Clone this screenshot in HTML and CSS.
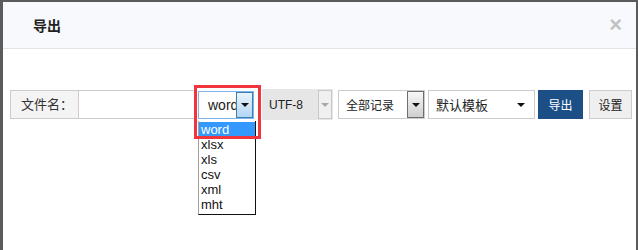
FILE: index.html
```html
<!DOCTYPE html>
<html lang="zh-CN">
<head>
    <meta charset="UTF-8">
    <meta name="viewport" content="width=device-width, initial-scale=1.0">
    <title>导出</title>
    <link rel="stylesheet" href="styles.css">
</head>
<body>
    <div class="modal">
        <div class="modal-header">
            <span class="modal-title">导出</span>
            <span class="modal-close">×</span>
        </div>
        <div class="modal-body">
            <div class="toolbar">
                <span class="field-label">文件名：</span>
                <input class="field-input" type="text">
                <div class="pick pick-type">
                    <span class="pick-text">word</span>
                    <span class="pick-btn"><i class="caret"></i></span>
                    <ul class="pick-list">
                        <li class="active">word</li>
                        <li>xlsx</li>
                        <li>xls</li>
                        <li>csv</li>
                        <li>xml</li>
                        <li>mht</li>
                    </ul>
                </div>
                <div class="pick pick-charset">
                    <span class="pick-text">UTF-8</span>
                    <span class="pick-btn"><i class="caret"></i></span>
                </div>
                <div class="pick pick-range">
                    <span class="pick-text">全部记录</span>
                    <span class="pick-btn"><i class="caret"></i></span>
                </div>
                <div class="pick pick-tpl">
                    <span class="pick-text">默认模板</span>
                    <i class="caret"></i>
                </div>
                <button class="btn btn-primary">导出</button>
                <button class="btn btn-default">设置</button>
            </div>
        </div>
    </div>
</body>
</html>
```

FILE: styles.css
```css
body {
    margin: 0;
    background-color: #5b5b5b;
    font-family: "Liberation Sans", "Noto Sans CJK SC", sans-serif;
    overflow: hidden;
}
.modal {
    margin: 2px 2px 0 3px;
    height: 248px;
    background-color: #fff;
}
.modal-header {
    height: 46px;
    background-color: #f8f9fd;
    border-bottom: 1px solid #e3e3e3;
    display: flex;
    align-items: center;
    justify-content: space-between;
    padding: 0 14px 0 30px;
}
.modal-title {
    font-size: 14px;
    font-weight: bold;
    color: #222;
}
.modal-close {
    font-size: 22px;
    font-weight: bold;
    color: #c2c2c2;
    line-height: 1;
}
.modal-body {
    padding: 41px 0 0 7px;
}
.toolbar {
    display: flex;
    align-items: center;
    height: 29px;
}
.field-label {
    box-sizing: border-box;
    width: 69px;
    height: 29px;
    line-height: 27px;
    padding-left: 10px;
    font-size: 13px;
    color: #333;
    background-color: #f4f4f4;
    border: 1px solid #ccc;
}
.field-input {
    box-sizing: border-box;
    width: 117px;
    height: 29px;
    margin: 0;
    border: 1px solid #ccc;
    border-left: none;
    outline: none;
}
.pick {
    position: relative;
    box-sizing: border-box;
    height: 29px;
    display: flex;
    align-items: center;
    font-size: 13px;
    color: #222;
}
.pick-text {
    flex: 1;
    min-width: 0;
    overflow: hidden;
    white-space: nowrap;
}
.pick-btn {
    flex: none;
    box-sizing: border-box;
    height: 100%;
    display: flex;
    align-items: center;
    justify-content: center;
}
.caret {
    width: 0;
    height: 0;
    border-left: 4px solid transparent;
    border-right: 4px solid transparent;
    border-top: 4px solid #111;
}

/* file type, highlighted */
.pick-type {
    width: 56px;
    height: 28px;
    margin-left: 2px;
    border: 1px solid #7eb4ea;
    background-color: #fff;
    font-size: 14px;
}
.pick-type .pick-text {
    padding-left: 9px;
}
.pick-type .pick-btn {
    width: 17px;
    border: 1px solid #3c7fb1;
    background: linear-gradient(#eaf4fc, #b3d6f3);
}
.pick-type::after {
    content: "";
    position: absolute;
    left: -5px;
    top: -7px;
    width: 61px;
    height: 48px;
    border: 3px solid #f0353d;
}
.pick-list {
    position: absolute;
    left: -1px;
    top: 29px;
    width: 58px;
    margin: 0;
    padding: 1px 0 2px;
    list-style: none;
    background-color: #fff;
    border-left: 1px solid #a0a0a0;
    border-right: 1px solid #111;
    border-bottom: 1px solid #111;
    box-sizing: border-box;
}
.pick-list li {
    height: 15px;
    line-height: 15px;
    padding-left: 2px;
    font-size: 13px;
    color: #111;
}
.pick-list li.active {
    background-color: #3399ff;
    color: #fff;
}

/* charset, disabled */
.pick-charset {
    width: 71px;
    height: 31px;
    margin-left: 8px;
    background-color: #e6e6e6;
    font-size: 12px;
}
.pick-charset .pick-text {
    padding-left: 7px;
}
.pick-charset .pick-btn {
    width: 14px;
    height: 29px;
    margin-right: 1px;
    border: 1px solid #c8c8c8;
    background-color: #f0f0f0;
}
.pick-charset .caret {
    border-top-color: #aaa;
}

/* record range */
.pick-range {
    width: 87px;
    margin-left: 5px;
    border: 1px solid #ccc;
    background-color: #fff;
    font-size: 12px;
}
.pick-range .pick-text {
    padding-left: 7px;
}
.pick-range .pick-btn {
    width: 17px;
    height: 27px;
    border: 1px solid #6e6e6e;
    background: linear-gradient(#f7f7f7, #cfcfcf);
}

/* template */
.pick-tpl {
    width: 107px;
    margin-left: 3px;
    border: 1px solid #ccc;
    background-color: #fff;
}
.pick-tpl .pick-text {
    padding-left: 7px;
}
.pick-tpl .caret {
    margin-right: 9px;
}
.btn {
    box-sizing: border-box;
    height: 29px;
    margin: 0;
    padding: 0;
    font-family: inherit;
    font-size: 12px;
    border: 1px solid #ccc;
}
.btn-primary {
    width: 45px;
    margin-left: 3px;
    background-color: #1c4f86;
    border-color: #1c4f86;
    color: #fff;
}
.btn-default {
    width: 43px;
    margin-left: 6px;
    background-color: #efefef;
    color: #222;
}
```
